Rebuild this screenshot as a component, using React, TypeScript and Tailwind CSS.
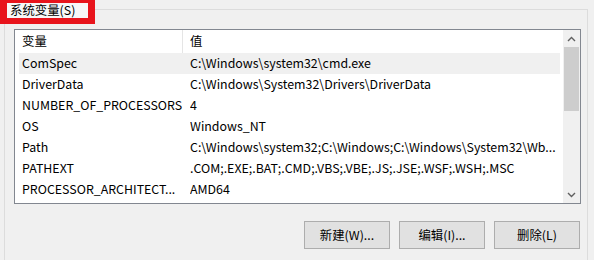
import React from "react";

const rows: [string, string][] = [
  ["ComSpec", "C:\\Windows\\system32\\cmd.exe"],
  ["DriverData", "C:\\Windows\\System32\\Drivers\\DriverData"],
  ["NUMBER_OF_PROCESSORS", "4"],
  ["OS", "Windows_NT"],
  ["Path", "C:\\Windows\\system32;C:\\Windows;C:\\Windows\\System32\\Wb..."],
  ["PATHEXT", ".COM;.EXE;.BAT;.CMD;.VBS;.VBE;.JS;.JSE;.WSF;.WSH;.MSC"],
  ["PROCESSOR_ARCHITECT...", "AMD64"],
];

function Chevron({ up }: { up?: boolean }) {
  return (
    <svg width="9" height="6" viewBox="0 0 9 6">
      <path
        d={up ? "M1 5 L4.5 1.5 L8 5" : "M1 1 L4.5 4.5 L8 1"}
        fill="none"
        stroke="#606060"
        strokeWidth="1.4"
      />
    </svg>
  );
}

export default function App() {
  return (
    <div
      className="relative w-[594px] h-[260px] overflow-hidden bg-[#f0f0f0] text-[12.4px] text-black"
      style={{ fontFamily: '"Noto Sans CJK SC", "Noto Sans", sans-serif' }}
    >
      {/* group box */}
      <div className="ml-[4px] mr-[6px] mt-[9px] h-[260px] border-t border-l border-r border-[#dcdcdc] pl-[9px] pr-[6px] pt-[19px]">
        <div className="flex h-[175px] w-[567px] border border-[#828790] bg-white">
          <div className="flex-1">
            <div className="flex h-[23px] items-center">
              <div className="w-[168px] pl-[7px] border-r border-[#e5e5e5] h-full flex items-center">变量</div>
              <div className="pl-[7px]">值</div>
            </div>
            {rows.map(([name, value], i) => (
              <div
                key={name}
                className={
                  "ml-[4px] mr-[3px] flex h-[21px] items-center whitespace-nowrap " +
                  (i === 0 ? "bg-[#f0f0f0]" : "")
                }
              >
                <div className="w-[171px] pl-[3px] overflow-hidden">{name}</div>
                <div className="flex-1 overflow-hidden">{value}</div>
              </div>
            ))}
          </div>
          <div className="flex w-[17px] flex-col bg-[#f0f0f0]">
            <div className="flex h-[17px] items-center justify-center">
              <Chevron up />
            </div>
            <div className="mx-[1px] h-[64px] bg-[#cdcdcd]" />
            <div className="flex-1" />
            <div className="flex h-[17px] items-center justify-center">
              <Chevron />
            </div>
          </div>
        </div>
        <div className="mt-[17px] flex w-[567px] justify-end gap-[9px] pr-[1px]">
          {["新建(W)...", "编辑(I)...", "删除(L)"].map((t) => (
            <button
              key={t}
              className="h-[28px] w-[86px] border border-[#adadad] bg-[#e1e1e1] text-[12.4px] text-black"
            >
              {t}
            </button>
          ))}
        </div>
      </div>

      {/* highlighted legend */}
      <div className="absolute left-0 top-0 flex h-[24px] w-[95px] items-center border-t-[3px] border-l-[7px] border-r-[7px] border-b-[6px] border-[#e8141c] bg-[#f7f7f7] pl-[3px] leading-none">
        系统变量(S)
      </div>
    </div>
  );
}
